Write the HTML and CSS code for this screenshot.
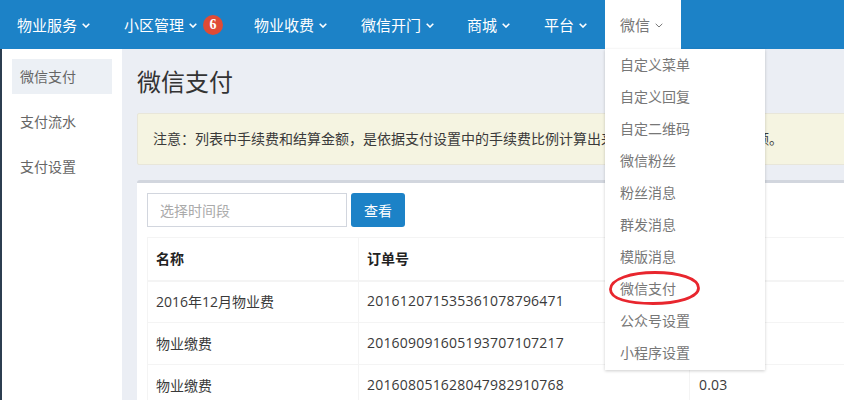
FILE: index.html
```html
<!DOCTYPE html>
<html lang="zh">
<head>
<meta charset="utf-8">
<title>微信支付</title>
<link rel="stylesheet" href="styles.css">
</head>
<body>
<header class="nav">
  <a class="nav-item i1">物业服务<svg class="chev" viewBox="0 0 8 5"><path d="M.7.8 4 4 7.3.8"/></svg></a>
  <a class="nav-item i2">小区管理<svg class="chev" viewBox="0 0 8 5"><path d="M.7.8 4 4 7.3.8"/></svg><span class="badge">6</span></a>
  <a class="nav-item i3">物业收费<svg class="chev" viewBox="0 0 8 5"><path d="M.7.8 4 4 7.3.8"/></svg></a>
  <a class="nav-item i4">微信开门<svg class="chev" viewBox="0 0 8 5"><path d="M.7.8 4 4 7.3.8"/></svg></a>
  <a class="nav-item i5">商城<svg class="chev" viewBox="0 0 8 5"><path d="M.7.8 4 4 7.3.8"/></svg></a>
  <a class="nav-item i6">平台<svg class="chev" viewBox="0 0 8 5"><path d="M.7.8 4 4 7.3.8"/></svg></a>
  <div class="nav-open">
    <a class="nav-item active">微信<svg class="chev" viewBox="0 0 8 5"><path d="M.7.8 4 4 7.3.8"/></svg></a>
    <ul class="menu">
      <li>自定义菜单</li>
      <li>自定义回复</li>
      <li>自定二维码</li>
      <li>微信粉丝</li>
      <li>粉丝消息</li>
      <li>群发消息</li>
      <li>模版消息</li>
      <li>微信支付</li>
      <li>公众号设置</li>
      <li>小程序设置</li>
    </ul>
    <svg class="ring" viewBox="0 0 91 34"><path d="M1.5 18C2 8 22 1.5 46 1.5c24 0 43.5 6 43.5 15.5S68 32.5 44 32.5C20 32.5 1 28 1.5 18Z"/></svg>
  </div>
</header>
<div class="body">
  <aside class="side">
    <a class="side-item on">微信支付</a>
    <a class="side-item">支付流水</a>
    <a class="side-item">支付设置</a>
  </aside>
  <main class="main">
    <h1 class="title">微信支付</h1>
    <div class="alert">注意：列表中手续费和结算金额，是依据支付设置中的手续费比例计算出来的，可能与实际到账金额。</div>
    <section class="box">
      <div class="filters">
        <input class="range" type="text" placeholder="选择时间段">
        <button class="btn" type="button">查看</button>
      </div>
      <table class="grid">
        <thead>
          <tr><th class="c1">名称</th><th class="c2">订单号</th><th class="c3">金额</th></tr>
        </thead>
        <tbody>
          <tr><td>2016年12月物业费</td><td class="num">201612071535361078796471</td><td class="num amt">0.01</td></tr>
          <tr><td>物业缴费</td><td class="num">201609091605193707107217</td><td class="num amt">0.02</td></tr>
          <tr><td>物业缴费</td><td class="num">201608051628047982910768</td><td class="num amt">0.03</td></tr>
        </tbody>
      </table>
    </section>
  </main>
</div>
</body>
</html>
```
FILE: styles.css
```css
* { box-sizing: border-box; }
html, body { margin: 0; height: 100%; overflow: hidden; }
body {
  width: 844px; height: 400px;
  font-family: "Open Sans", "Noto Sans CJK SC", sans-serif;
  font-size: 14px; color: #3a3a3a; background: #ebeef4;
}
.nav { display: flex; height: 49px; background: #1c82c7; position: relative; z-index: 5; }
.nav-item {
  display: flex; align-items: center; height: 49px;
  padding: 0 15px; color: #fff; font-size: 15px; white-space: nowrap;
}
.i1 { padding-left: 17px; padding-right: 19px; }
.i2 { padding-right: 0; }
.i3 { padding-left: 31px; }
.i4 { padding-left: 19px; }
.i5 { padding-left: 18px; }
.i6 { padding-left: 19px; padding-right: 18px; }
.chev { width: 8px; height: 5px; margin-left: 5px; margin-top: 2px; fill: none; stroke: #fff; stroke-width: 1.6; }
.badge {
  width: 20px; height: 20px; margin-left: 6px; border-radius: 50%;
  background: #e04b35; color: #fff; font: bold 14px/20px "Liberation Serif", serif; text-align: center;
}
.nav-open { position: relative; }
.nav-item.active { width: 76px; background: #fff; color: #777; padding: 0 15px; }
.nav-item.active .chev { stroke: #777; stroke-width: 1; margin-left: 5px; }
.menu {
  position: absolute; left: 0; top: 49px; width: 160px; margin: 0; padding: 0 0 1px;
  list-style: none; background: #fff; box-shadow: 0 1px 3px rgba(0,0,0,.2); z-index: 6;
}
.menu li { height: 32px; line-height: 32px; padding-left: 15px; color: #777; font-size: 14px; }
.ring { position: absolute; left: 4px; top: 271px; width: 91px; height: 34px; fill: none; stroke: #e8262e; stroke-width: 2.8; z-index: 7; }
.body { display: flex; height: 351px; }
.side { width: 122px; flex: none; background: #fff; border-left: 2px solid #2c3e50; padding: 10px 10px 0; display: flex; flex-direction: column; gap: 10px; }
.side-item { height: 35px; line-height: 35px; padding-left: 8px; color: #666; font-size: 14px; }
.side-item.on { background: #ecf0f5; }
.main { width: 800px; flex: none; padding: 0 0 0 15px; }
.title { margin: 0; height: 64px; line-height: 66px; font-size: 24px; font-weight: 400; color: #333; }
.alert {
  height: 52px; line-height: 49px; padding-left: 15px; background: #f5f4e1;
  border: 1px solid #e8e6d9; border-radius: 2px; white-space: nowrap; overflow: hidden;
}
.box { margin-top: 15px; background: #fff; border-top: 3px solid #d2d6de; border-radius: 3px 3px 0 0; padding: 10px; }
.filters { display: flex; gap: 4px; margin-bottom: 10px; }
.range { width: 200px; height: 34px; border: 1px solid #d2d6de; padding: 0 12px; font: 14px "Open Sans", "Noto Sans CJK SC", sans-serif; outline: 0; }
.range::placeholder { color: #aaa; opacity: 1; }
.btn { width: 54px; height: 34px; border: 0; border-radius: 3px; background: #1c82c7; color: #fff; font: 14px "Open Sans", "Noto Sans CJK SC", sans-serif; }
.grid { border-collapse: collapse; table-layout: fixed; width: 760px; }
.grid th, .grid td { border: 1px solid #f4f4f4; padding: 0 8px 2px; height: 42px; text-align: left; font-weight: 400; white-space: nowrap; }
.grid th { font-weight: 700; height: 43px; border-bottom-width: 2px; color: #222; }
.grid .num { letter-spacing: .2px; }
.grid .amt { padding-left: 9px; }
.c1 { width: 211px; } .c2 { width: 331px; }
```
